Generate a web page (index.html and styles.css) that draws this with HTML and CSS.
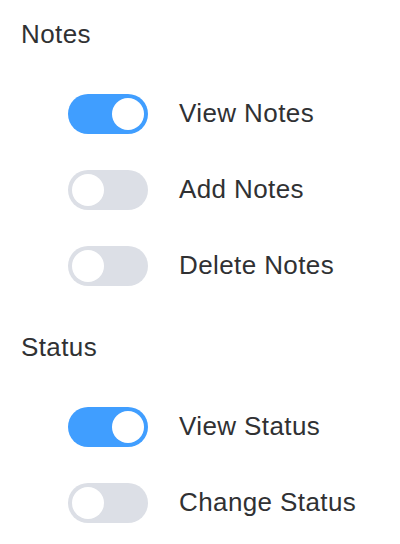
FILE: index.html
```html
<!DOCTYPE html>
<html lang="en">

<head>
    <meta charset="UTF-8">
    <meta name="viewport" content="width=device-width, initial-scale=1.0">
    <title>Permissions</title>
    <link rel="stylesheet" href="styles.css">
</head>

<body>
    <div class="container">
        <div class="section">
            <h2>Notes</h2>
            <div class="options">
                <label class="option">
                    <input type="checkbox" checked>
                    <span class="switch"></span>
                    <span class="option-label">View Notes</span>
                </label>
                <label class="option">
                    <input type="checkbox">
                    <span class="switch"></span>
                    <span class="option-label">Add Notes</span>
                </label>
                <label class="option">
                    <input type="checkbox">
                    <span class="switch"></span>
                    <span class="option-label">Delete Notes</span>
                </label>
            </div>
        </div>

        <div class="section">
            <h2>Status</h2>
            <div class="options">
                <label class="option">
                    <input type="checkbox" checked>
                    <span class="switch"></span>
                    <span class="option-label">View Status</span>
                </label>
                <label class="option">
                    <input type="checkbox">
                    <span class="switch"></span>
                    <span class="option-label">Change Status</span>
                </label>
            </div>
        </div>
    </div>
</body>

</html>
```

FILE: styles.css
```css
body {
    margin: 0;
    font-family: "Liberation Sans", Arial, sans-serif;
    color: #303133;
    background-color: #fff;
    letter-spacing: 0.4px;
}

.container {
    padding: 16px 0 0 21px;
}

.section {
    margin-bottom: 43px;
}

h2 {
    margin: 0;
    font-size: 26px;
    font-weight: normal;
    line-height: 36px;
}

.options {
    display: flex;
    flex-direction: column;
    gap: 36px;
    margin-top: 42px;
    padding-left: 47px;
}

.option {
    display: flex;
    align-items: center;
    gap: 31px;
    height: 40px;
    cursor: pointer;
}

.option input {
    display: none;
}

.switch {
    position: relative;
    width: 80px;
    height: 40px;
    border-radius: 20px;
    background-color: #dcdfe6;
    transition: background-color 0.3s ease;
}

.switch::after {
    content: "";
    position: absolute;
    top: 4px;
    left: 4px;
    width: 32px;
    height: 32px;
    border-radius: 50%;
    background-color: #fff;
    transition: left 0.3s ease;
}

.option input:checked + .switch {
    background-color: #409eff;
}

.option input:checked + .switch::after {
    left: 44px;
}

.option-label {
    font-size: 26px;
    line-height: 36px;
    margin-top: -2px;
}
```
